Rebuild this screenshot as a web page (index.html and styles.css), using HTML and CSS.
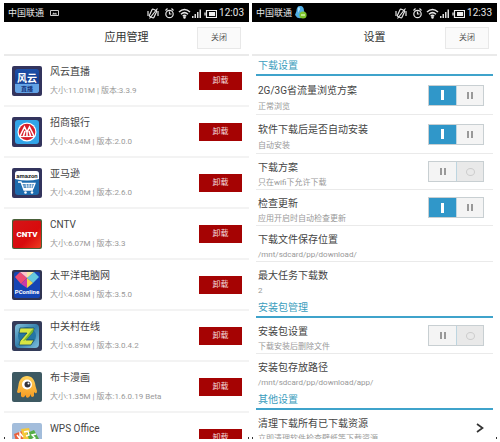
FILE: index.html
```html
<!DOCTYPE html>
<html lang="zh-CN">
<head>
<meta charset="utf-8">
<meta name="viewport" content="width=device-width, initial-scale=1">
<title>应用管理</title>
<link rel="stylesheet" href="styles.css">
</head>
<body>
<svg class="defs" aria-hidden="true">
  <symbol id="status" viewBox="0 0 70 18">
    <g fill="none" stroke="#e4e4e4" stroke-width="1.200">
      <rect x="3.500" y="5.500" width="5" height="8" rx="1" transform="rotate(25 6 9.500)"/>
      <path d="M1 7v5M11 7v5M2.500 14.500L10.500 4.500"/>
      <circle cx="22.500" cy="10" r="3.700"/>
      <path d="M22.500 7.500V10h2M18.500 6.500l2-2M26.500 6.500l-2-2"/>
      <path d="M32 8Q37.500 3 43 8M34 10.200Q37.500 7 41 10.200M35.800 12.200Q37.500 10.500 39.200 12.200" stroke-width="1.500"/>
    </g>
    <circle cx="37.500" cy="13.500" r="1.200" fill="#eee"/>
    <path d="M45 12h1.500v2H45zM47.500 10H49v4h-1.500zM50 8h1.500v6H50zM52.500 5.500H54V14h-1.500z" fill="#ddd"/>
    <path d="M59.500 6.500h10v7h-10zM58 8.500v3" fill="none" stroke="#eee" stroke-width="1.200"/>
    <path d="M62 8h6v4h-6z" fill="#eee"/>
  </symbol>
</svg>
<main class="screens">
  <section class="phone">
    <div class="status">
      <span class="carrier">中国联通</span>
      <svg class="notice" viewBox="0 0 9 8"><path d="M.5 1.500h8v5h-8z" fill="none" stroke="#ccc"/><path d="M2 5.500l1.500-2 1.500 1 1-1 1 2z" fill="#ccc"/></svg>
      <svg class="status-icons"><use href="#status"/></svg>
      <span class="time">12:03</span>
    </div>
    <header class="header"><h1>应用管理</h1><button class="close">关闭</button></header>
    <ul class="apps">
      <li class="app">
        <svg class="icon" viewBox="0 0 30 30"><defs><linearGradient id="a" x2="0" y2="1"><stop stop-color="#1d50a8"/><stop offset=".5" stop-color="#123c91"/><stop offset="1" stop-color="#4b92df"/></linearGradient></defs><rect width="30" height="30" rx="2" fill="#33345d"/><rect x="3" y="3" width="24" height="24" rx="3" fill="url(#a)"/><path d="M3 18h24v6q0 3-3 3H6q-3 0-3-3z" fill="#63a3e5"/><text x="15" y="15.500" class="logo feng">风云</text><text x="15" y="25" class="logo live">直播</text></svg>
        <div class="info"><h2>风云直播</h2><p>大小:11.01M | 版本:3.3.9</p></div><button class="remove">卸载</button>
      </li>
      <li class="app">
        <svg class="icon" viewBox="0 0 30 30"><rect width="30" height="30" rx="2" fill="#33345d"/><rect x="3" y="3" width="24" height="24" rx="3" fill="#31a4e8"/><circle cx="15" cy="15" r="9.500" fill="#fff"/><circle cx="15" cy="15" r="8.300" fill="#d61e2a"/><path d="M8 19l4.500-9 2.500 5 2.500-5 4.500 9M11.500 19l1.500-5M18.500 19L17 14M15 15v4" fill="none" stroke="#fff" stroke-width="1.600"/><path d="M8 19.500h14" stroke="#fff" stroke-width="1.200"/></svg>
        <div class="info"><h2>招商银行</h2><p>大小:4.64M | 版本:2.0.0</p></div><button class="remove">卸载</button>
      </li>
      <li class="app">
        <svg class="icon" viewBox="0 0 30 30"><rect width="30" height="30" rx="2" fill="#33345d"/><rect x="3" y="3" width="24" height="24" rx="3" fill="#1d6bad"/><path d="M3 11V6q0-3 3-3h18q3 0 3 3v5q-12 3-24 0z" fill="#fff"/><text x="15" y="9.500" class="logo amazon">amazon</text><path d="M6 14h3l3 8h9M10 15.500h13l-2 5h-9" fill="none" stroke="#fff" stroke-width="1.300"/><path d="M11 18h11M14 15.500l1 5M17 15.500v5M20 15.500l-1 5" stroke="#fff" stroke-width=".8"/><circle cx="13.500" cy="24.500" r="1.300" fill="#fff"/><circle cx="20" cy="24.500" r="1.300" fill="#fff"/></svg>
        <div class="info"><h2>亚马逊</h2><p>大小:4.20M | 版本:2.6.0</p></div><button class="remove">卸载</button>
      </li>
      <li class="app">
        <svg class="icon" viewBox="0 0 30 30"><defs><linearGradient id="c" x2="1" y2="1"><stop stop-color="#d51518"/><stop offset=".6" stop-color="#d80b0c"/><stop offset="1" stop-color="#ef3d20"/></linearGradient></defs><rect width="30" height="30" rx="2" fill="#496039"/><rect x="1" y="1.500" width="28" height="27.500" rx="2" fill="url(#c)"/><text x="15" y="17.500" class="logo cntv">CNTV</text></svg>
        <div class="info"><h2>CNTV</h2><p>大小:6.07M | 版本:3.3</p></div><button class="remove">卸载</button>
      </li>
      <li class="app">
        <svg class="icon" viewBox="0 0 30 30"><rect width="30" height="30" rx="2" fill="#303350"/><rect x="2" y="2" width="26" height="26" rx="2" fill="#1544b4"/><path d="M3 7l5-5 7 6-6 6z" fill="#ed4b73"/><path d="M8 2h7v6z" fill="#ffc2cb"/><path d="M15 8l7-6 5 5-6 6z" fill="#65c8df"/><path d="M15 2h7l-7 6z" fill="#f4e8a2"/><path d="M9 14l6-6v10z" fill="#c93ba8"/><path d="M15 8l6 5-6 5z" fill="#f4d44a"/><text x="15" y="24" class="logo pc">PConline</text></svg>
        <div class="info"><h2>太平洋电脑网</h2><p>大小:4.68M | 版本:3.5.0</p></div><button class="remove">卸载</button>
      </li>
      <li class="app">
        <svg class="icon" viewBox="0 0 30 30"><defs><linearGradient id="z" x2="1" y2="1"><stop stop-color="#83c2db"/><stop offset=".5" stop-color="#347fac"/><stop offset="1" stop-color="#7fc1df"/></linearGradient></defs><rect width="30" height="30" rx="2" fill="#333b59"/><rect x="3" y="3" width="24" height="24" rx="4" fill="url(#z)"/><circle cx="15" cy="15" r="9" fill="#2475a4"/><path d="M8 7h14l-1 4-7 8h8l-3 5H7l1-4 7-8H7z" fill="#d7e543" stroke="#154c64" stroke-width=".8"/><path d="M22 7l-1 4-7 8-3 1 8-10z" fill="#79b72d"/></svg>
        <div class="info"><h2>中关村在线</h2><p>大小:6.89M | 版本:3.0.4.2</p></div><button class="remove">卸载</button>
      </li>
      <li class="app">
        <svg class="icon" viewBox="0 0 30 30"><defs><linearGradient id="b" x2="0" y2="1"><stop stop-color="#ffd35b"/><stop offset="1" stop-color="#f59b23"/></linearGradient></defs><rect width="30" height="30" rx="2" fill="#3d5962"/><path d="M15 4c5 0 8 4 8.500 10l1.500 5q0 3-2 2l-1-1v4q-2 2-3 0v-2l-1 2q-2 3-4 1v-2l-2 2q-2 1-3-1v-4q-3 2-4 0 1-4 1.500-7C7 8 10 4 15 4z" fill="url(#b)"/><circle cx="15" cy="12.500" r="5" fill="#fff"/><circle cx="15.500" cy="12.500" r="3" fill="#34333c"/><circle cx="16.500" cy="11.500" r="1" fill="#fff"/></svg>
        <div class="info"><h2>布卡漫画</h2><p>大小:1.35M | 版本:1.6.0.19 Beta</p></div><button class="remove">卸载</button>
      </li>
      <li class="app">
        <svg class="icon" viewBox="0 0 30 30"><rect width="30" height="30" rx="2" fill="#a3bddb"/><path d="M2 11l8-3 3 9-8 5z" fill="#eb603b"/><path d="M9 6l8-1 3 10-8 4z" fill="#f4c83d"/><path d="M15 10l7-3 5 9-8 7z" fill="#55ad46"/><path d="M5 12l3 4 0-6 3 4M12 9l4-1 1 4-3 1M24 11l-4 1 3 3-4 2" fill="none" stroke="#fff" stroke-width="1.400"/></svg>
        <div class="info"><h2>WPS Office</h2></div><button class="remove">卸载</button>
      </li>
    </ul>
  </section>

  <section class="phone">
    <div class="status">
      <span class="carrier">中国联通</span>
      <svg class="qq" viewBox="0 0 12 13"><path d="M5 0c3 0 4 2 4 5l2 4-2 1c-1 3-7 3-8 0L0 9l1.500-4C1.500 2 2.500 0 5 0z" fill="#50aee4"/><path d="M3 1.500q2-1 2 2L3 7z" fill="#a4dcf8"/><circle cx="8" cy="9" r="3.600" fill="#7dc52c"/><path d="M6 9h4" stroke="#eaffc8" stroke-width="1.200"/></svg>
      <svg class="status-icons"><use href="#status"/></svg>
      <span class="time">12:33</span>
    </div>
    <header class="header"><h1>设置</h1><button class="close">关闭</button></header>
    <div class="settings">
      <h2 class="group">下载设置</h2>
      <div class="setting tall"><div class="text"><label for="flow">2G/3G省流量浏览方案</label><p>正常浏览</p></div><span class="toggle"><input type="checkbox" id="flow" checked><i class="left"></i><i class="right"></i></span></div>
      <div class="setting tall"><div class="text"><label for="auto">软件下载后是否自动安装</label><p>自动安装</p></div><span class="toggle"><input type="checkbox" id="auto" checked><i class="left"></i><i class="right"></i></span></div>
      <div class="setting"><div class="text"><label for="wifi">下载方案</label><p>只在wifi下允许下载</p></div><span class="toggle"><input type="checkbox" id="wifi"><i class="left"></i><i class="right"></i></span></div>
      <div class="setting"><div class="text"><label for="update">检查更新</label><p>应用开启时自动检查更新</p></div><span class="toggle"><input type="checkbox" id="update" checked><i class="left"></i><i class="right"></i></span></div>
      <div class="setting"><div class="text"><h3>下载文件保存位置</h3><p>/mnt/sdcard/pp/download/</p></div></div>
      <div class="setting last"><div class="text"><h3>最大任务下载数</h3><p>2</p></div></div>
      <h2 class="group">安装包管理</h2>
      <div class="setting"><div class="text"><label for="package">安装包设置</label><p>下载安装后删除文件</p></div><span class="toggle"><input type="checkbox" id="package"><i class="left"></i><i class="right"></i></span></div>
      <div class="setting last"><div class="text"><h3>安装包存放路径</h3><p>/mnt/sdcard/pp/download/app/</p></div></div>
      <h2 class="group">其他设置</h2>
      <div class="setting"><div class="text"><h3>清理下载所有已下载资源</h3><p>立即清理软件检查壁纸等下载资源</p></div><button class="more" aria-label="清理"><svg viewBox="0 0 8 10"><path d="M1 1l5.500 4L1 9" fill="none" stroke="#333" stroke-width="1.700"/></svg></button></div>
    </div>
  </section>
</main>
</body>
</html>
```
FILE: styles.css
```css
*, *::before, *::after { box-sizing: border-box; }
body, h1, h2, h3, p, ul { margin: 0; padding: 0; font-weight: 400; }
body {
  background: #fff;
  color: #444;
  font-family: Roboto, "Noto Sans CJK SC", sans-serif;
  font-size: 10px;
  line-height: 14px;
}
button { font: inherit; padding: 0; border: 0; }
svg { display: block; flex: none; }
.defs { position: absolute; width: 0; height: 0; }

.screens {
  display: grid;
  grid-template-columns: 1fr 1fr;
  gap: 3px;
  height: 100vh;
  padding: 3px 3px 3px 4px;
}
.phone { position: relative; min-width: 0; overflow: hidden; }
.phone::before, .phone::after {
  content: "";
  position: absolute;
  z-index: 1;
  bottom: 0;
  width: 1px;
  height: 2px;
  background: #333;
}
.phone::before { left: 0; }
.phone::after { right: 0; }

.status {
  display: flex;
  align-items: center;
  height: 19px;
  padding: 0 5px 0 4px;
  background: #000;
  color: #e6e6e6;
}
.carrier { font-size: 9px; }
.notice { width: 9px; height: 8px; margin-left: 6px; }
.qq { width: 12px; height: 13px; margin-left: 3px; }
.status-icons { width: 70px; height: 18px; margin-left: auto; }
.time { margin-left: 2px; }

.header {
  display: grid;
  grid-template-columns: 1fr auto 1fr;
  align-items: center;
  height: 34px;
  padding: 0 8px;
  border-bottom: 2px solid #eaeaea;
}
.header h1 { grid-column: 2; font-size: 11px; color: #333; }
.close {
  justify-self: end;
  width: 44px;
  height: 22px;
  border: 1px solid #e8e8e8;
  background: #fafafa;
  color: #555;
  font-size: 8px;
}

.apps { list-style: none; }
.app {
  display: flex;
  align-items: center;
  gap: 8px;
  height: 51px;
  padding: 0 7px 0 8px;
  border-bottom: 2px solid #f3f3f3;
}
.icon { width: 30px; height: 30px; }
.info { flex: 1; align-self: flex-start; min-width: 0; padding-top: 9px; white-space: nowrap; }
.info h2 { margin-bottom: 5px; font-size: 10px; }
.info p, .setting p { color: #999; font-size: 8px; }
.remove {
  width: 43px;
  height: 18px;
  background: #a50303;
  color: #f3dede;
  font-size: 8px;
}
.logo { text-anchor: middle; font-weight: 700; fill: #fff; }
.feng { font-size: 10px; }
.live { font-size: 6px; fill: #15367e; }
.amazon { font-size: 6px; fill: #222; }
.cntv { font-size: 8px; font-weight: 900; }
.pc { font-size: 6px; }

.settings { padding: 0 4px; }
.group {
  height: 20px;
  padding-left: 2px;
  border-bottom: 2px solid #3fa3cb;
  color: #3b9dbd;
  font-size: 10px;
  line-height: 20px;
}
.setting {
  display: flex;
  align-items: center;
  justify-content: space-between;
  height: 36px;
  padding: 0 9px 0 2px;
  border-bottom: 1px solid #eaeaea;
  white-space: nowrap;
}
.text { align-self: flex-start; padding-top: 7px; }
.text p { margin-top: 1px; }
.setting.tall { height: 39px; }
.tall .text { padding-top: 8px; }
.tall .text p { margin-top: 2px; }
.setting.last { border-bottom-color: transparent; }
.setting label, .setting h3 { display: block; font-size: 10px; }

.toggle {
  position: relative;
  display: grid;
  grid-template-columns: 1fr 1fr;
  width: 56px;
  height: 21px;
  border: 1px solid #c8cfd2;
}
.toggle input { position: absolute; inset: 0; width: 100%; height: 100%; margin: 0; opacity: 0; }
.toggle i { display: grid; place-items: center; background: #f4f4f4; }
.toggle i::before {
  content: "";
  width: 6px;
  height: 7px;
  border: solid #999;
  border-width: 0 2px;
}
.toggle .right { border-left: 1px solid #bdd5e0; background: #e9e9e9; }
.toggle .right::before {
  width: 9px;
  height: 8px;
  border: 1px solid #ccc;
  border-radius: 50%;
}
.toggle input:checked ~ .left { background: #3097c9; }
.toggle input:checked ~ .left::before { width: 3px; height: 10px; border: 0; background: #fff; }
.toggle input:checked ~ .right { background: #f4f4f4; }
.toggle input:checked ~ .right::before {
  width: 6px;
  height: 7px;
  border: solid #999;
  border-width: 0 2px;
  border-radius: 0;
}
.more { background: none; }
.more svg { width: 8px; height: 10px; }
```
